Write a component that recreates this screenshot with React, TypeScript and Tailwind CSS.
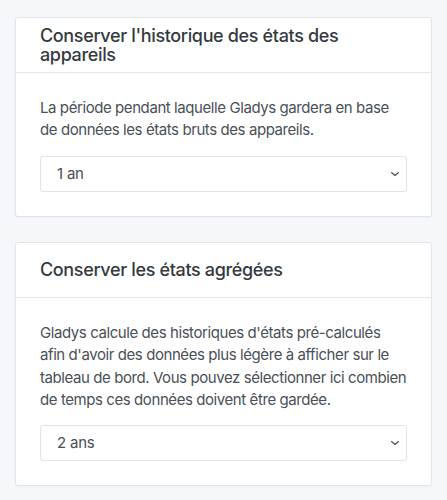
import React from "react";

const ChevronDown = () => (
  <svg
    className="pointer-events-none absolute right-[6px] top-1/2 h-[8px] w-[12px] -translate-y-1/2 text-[#495057]"
    viewBox="0 0 12 8"
    fill="none"
    stroke="currentColor"
    strokeWidth={1.1}
  >
    <path d="M2.5 2.5l3.5 3 3.5-3" strokeLinecap="round" strokeLinejoin="round" />
  </svg>
);

type SettingCardProps = {
  title: string;
  description: string;
  value: string;
  options: string[];
};

const SettingCard = ({ title, description, value, options }: SettingCardProps) => (
  <div className="rounded-[3px] border border-[#e0e5ec] bg-white shadow-[0_1px_2px_rgba(0,0,0,0.03)]">
    <div className="flex min-h-[55px] items-center border-b border-[#e0e5ec] px-6">
      <h3 className="text-[18px] font-medium leading-[19px] tracking-[-0.35px] text-[#343a40]">{title}</h3>
    </div>
    <div className="px-6 pb-6 pt-6">
      <p className="mb-[14px] text-[15px] leading-[22.4px] tracking-[-0.42px] text-[#495057]">{description}</p>
      <div className="relative">
        <select
          defaultValue={value}
          className="h-[36px] w-full appearance-none rounded-[3px] border border-[#dfe3ea] bg-white pl-4 pr-8 text-[15px] tracking-[-0.22px] text-[#495057] outline-none"
        >
          {options.map((o) => (
            <option key={o}>{o}</option>
          ))}
        </select>
        <ChevronDown />
      </div>
    </div>
  </div>
);

export default function App() {
  return (
    <div
      className="min-h-screen bg-[#f5f7fb] px-[15px] pt-[17px] pb-6"
      style={{ fontFamily: "Inter, 'Noto Sans', sans-serif" }}
    >
      <div className="flex flex-col gap-[25px]">
        <SettingCard
          title="Conserver l'historique des états des appareils"
          description="La période pendant laquelle Gladys gardera en base de données les états bruts des appareils."
          value="1 an"
          options={["1 semaine", "1 mois", "3 mois", "6 mois", "1 an", "2 ans", "Illimité"]}
        />
        <SettingCard
          title="Conserver les états agrégées"
          description="Gladys calcule des historiques d'états pré-calculés afin d'avoir des données plus légère à afficher sur le tableau de bord. Vous pouvez sélectionner ici combien de temps ces données doivent être gardée."
          value="2 ans"
          options={["1 mois", "3 mois", "6 mois", "1 an", "2 ans", "5 ans", "Illimité"]}
        />
      </div>
    </div>
  );
}
